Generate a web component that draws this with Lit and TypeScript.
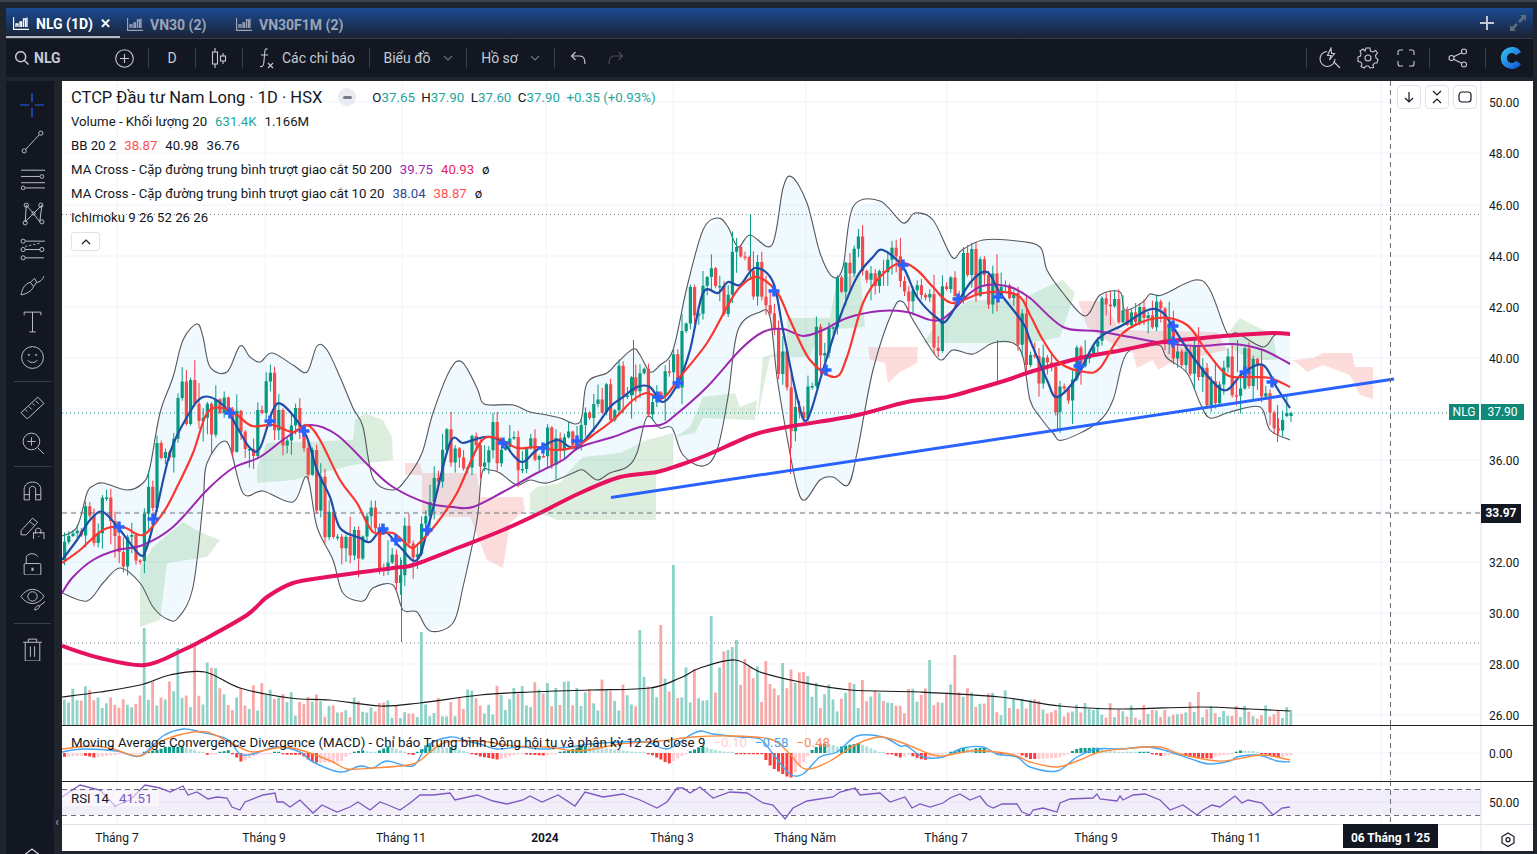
import {LitElement, html, svg, css} from 'lit'
import {customElement} from 'lit/decorators.js'

type Pt = [number, number]

const pts = (s: string): Pt[] =>
  s.trim().split(/\s+/).map((p) => p.split(',').map(Number) as Pt)

// all series are in screen coordinates, read from the reference
const bbUpper = pts('62,536 77,527 87,493 93,486 103,483 127,490 143,483 150,467 160,413 173,377 183,340 197,324 203,337 210,367 227,372 240,346 250,357 260,362 272,353 293,365 307,372 317,346 327,350 340,377 353,408 363,427 373,478 393,490 407,478 422,453 433,413 450,370 462,362 477,388 482,402 490,405 513,405 530,412 547,415 560,418 580,422 587,383 607,373 617,363 633,349 640,355 650,372 660,365 673,350 687,287 703,230 718,218 728,227 738,247 750,235 772,245 783,188 792,177 807,203 820,253 833,277 843,267 853,207 880,201 903,223 915,213 933,220 952,257 962,250 983,240 1017,241 1040,247 1047,270 1063,293 1085,316 1100,295 1120,292 1125,310 1143,302 1150,294 1162,295 1195,280 1210,290 1227,333 1237,333 1263,347 1275,335 1290,333')
const bbLower = pts('62,593 87,601 103,583 120,568 140,583 153,607 167,619 178,618 193,587 203,503 207,463 227,442 243,493 263,491 293,502 307,477 317,527 333,560 343,593 363,601 373,588 393,585 403,610 417,612 430,631 453,623 463,587 477,520 482,473 490,470 500,473 517,485 530,480 547,483 573,473 583,470 597,480 610,473 627,467 637,453 647,417 660,428 672,428 683,455 703,466 717,450 728,397 738,330 760,312 770,317 777,377 787,437 797,487 805,500 820,480 833,477 848,485 857,453 873,370 893,310 903,302 913,320 933,352 942,360 953,350 973,354 993,343 1013,343 1023,357 1030,400 1040,417 1053,433 1063,440 1097,423 1113,400 1127,353 1158,345 1167,358 1187,373 1200,403 1210,418 1230,412 1260,407 1270,430 1290,440')
const ma10 = pts('62,560 77,540 90,520 103,512 120,530 140,555 147,547 155,517 170,453 187,417 203,397 223,405 237,427 250,448 260,448 273,410 283,405 305,433 317,470 330,497 340,528 360,538 370,542 383,530 400,547 417,560 430,520 450,443 463,443 480,438 490,437 503,442 513,455 523,462 537,450 557,440 570,447 580,445 597,425 610,407 623,397 637,387 650,387 663,402 678,383 690,350 703,293 718,293 728,282 740,285 755,268 773,282 783,330 797,397 807,420 823,370 840,317 857,277 873,257 883,250 903,267 917,297 937,318 947,320 970,283 987,272 1000,293 1023,323 1030,340 1047,380 1057,397 1077,377 1097,340 1123,325 1148,310 1162,312 1173,327 1190,353 1213,382 1227,390 1243,373 1263,365 1277,388 1290,408')
const ma20 = pts('62,563 80,550 103,530 123,527 143,535 163,513 177,487 193,453 207,413 223,408 237,415 252,426 273,425 293,432 307,425 320,440 340,480 357,503 373,532 393,533 410,547 417,545 437,523 457,493 480,443 497,438 517,448 537,447 557,450 577,446 593,435 613,420 633,400 647,393 663,398 680,377 707,343 727,307 740,287 757,277 777,292 790,320 810,360 835,377 847,357 863,303 880,277 900,263 917,270 933,287 952,303 983,293 1017,295 1030,315 1043,340 1060,363 1085,372 1100,368 1123,333 1157,318 1187,325 1207,352 1227,375 1247,377 1270,378 1290,387')
const ma50 = pts('62,593 73,577 93,560 117,550 143,545 173,527 207,490 233,468 260,457 287,437 310,425 337,435 370,467 393,487 427,503 453,507 473,507 503,492 537,473 563,460 580,447 613,437 640,427 660,425 673,417 707,387 740,350 763,332 783,329 803,336 823,330 847,318 880,311 907,312 940,320 970,293 987,285 1010,287 1030,298 1063,327 1097,331 1130,337 1157,342 1197,346 1233,344 1263,350 1290,364')
const ma200 = pts('62,646 100,658 145,665 183,650 203,640 247,615 267,597 293,583 327,577 393,568 413,565 460,547 503,530 540,513 580,493 620,477 657,472 680,465 707,455 753,435 787,427 853,416 907,402 947,397 973,390 1007,380 1030,372 1080,358 1123,350 1163,342 1203,338 1237,335 1273,333 1290,334')
const volMa = pts('62,697 100,692 140,685 170,675 205,672 240,688 290,698 330,700 380,706 420,703 480,695 530,692 590,690 650,688 680,678 700,668 735,660 760,672 800,682 850,690 920,692 1000,697 1060,706 1120,709 1200,707 1250,709 1290,711')
const macd = pts('62,753 83,750 117,752 140,757 163,737 183,730 200,733 227,740 240,755 253,755 277,748 300,753 313,763 340,773 360,767 373,769 387,762 413,767 427,747 450,738 467,742 480,745 497,750 520,748 543,750 570,748 590,745 620,743 647,743 667,750 687,738 700,732 713,735 740,738 760,740 773,755 790,775 803,775 820,758 837,753 857,737 883,738 900,747 907,747 923,758 943,758 963,749 983,748 997,755 1017,758 1030,768 1057,772 1077,758 1097,750 1120,750 1147,748 1167,752 1197,762 1210,765 1230,762 1237,758 1253,756 1263,757 1277,762 1290,763')
const signal = pts('62,750 93,747 113,750 140,757 160,743 183,735 207,733 233,745 253,753 283,748 307,753 333,763 347,770 373,769 413,765 430,753 447,743 480,742 513,747 547,748 580,752 620,745 660,742 693,738 730,737 770,740 787,752 800,767 810,770 830,762 857,745 880,738 900,743 913,748 930,755 943,757 970,752 997,753 1017,757 1030,763 1057,768 1077,762 1100,753 1133,749 1160,748 1180,755 1217,762 1237,760 1263,756 1290,761')
const rsi = pts('62,797 80,785 100,790 115,806 130,800 145,785 160,788 170,792 183,786 188,795 197,792 208,799 217,797 227,798 232,807 240,810 245,802 263,795 275,793 277,802 283,802 290,807 300,800 313,813 322,805 337,812 350,807 358,802 370,810 380,802 388,805 400,810 410,803 420,795 433,795 450,793 455,800 477,795 493,801 507,804 523,800 530,796 542,802 558,795 575,806 585,792 603,797 623,794 640,800 657,808 667,802 677,788 683,788 690,793 700,787 713,798 730,792 747,793 763,803 773,805 785,819 793,808 807,801 833,797 840,792 855,788 860,795 880,793 890,802 905,797 912,808 920,804 930,807 943,803 950,798 960,794 970,800 980,796 987,805 993,808 1002,804 1017,804 1022,812 1030,815 1033,810 1043,808 1057,812 1060,803 1070,799 1093,798 1097,794 1100,799 1117,801 1120,796 1123,800 1133,795 1145,794 1160,800 1170,810 1183,805 1197,815 1203,810 1212,805 1220,807 1235,796 1242,803 1248,800 1262,803 1273,815 1282,808 1290,807')
const tail = pts('1262,382 1268,405 1272,428 1277,432 1282,415 1286,420 1290,414')

const cloudGreen = [
  '140,567 153,547 183,522 200,532 220,540 207,557 167,563 160,620 140,627',
  '257,467 267,443 353,440 355,420 365,413 383,420 392,437 393,460 353,465 293,480 257,483',
  '530,493 537,487 560,483 570,470 583,457 620,453 647,440 673,433 673,467 656,470 656,520 558,520 530,510',
  '675,437 690,427 703,397 735,393 740,407 757,400 755,420 703,418 695,433',
  '757,420 763,357 787,350 787,318 830,318 837,280 860,273 865,327 820,330 810,357 770,357',
  '923,343 940,320 970,300 1020,300 1040,290 1063,280 1075,293 1060,337 1030,343',
  '1228,333 1240,318 1257,327 1273,333 1277,360 1250,360 1230,347',
]
const cloudRed = [
  '405,463 420,463 422,473 477,473 480,497 523,497 525,510 510,523 503,568 487,560 470,517 447,517 422,512 422,475 405,475',
  '868,347 918,347 917,363 900,372 888,383 885,363 870,360',
  '1078,301 1103,301 1120,330 1217,332 1227,350 1170,363 1158,370 1153,360 1137,368 1133,353 1117,347 1087,327',
  '1292,360 1313,358 1323,353 1352,353 1355,367 1373,367 1373,399 1360,395 1350,375 1323,365 1307,372 1297,363',
]
const crosses: Pt[] = pts('119,527 153,519 230,413 270,421 304,431 383,529 396,540 427,530 503,443 543,448 577,441 658,397 678,383 774,291 826,370 903,265 958,299 998,297 1079,366 1173,326 1173,342 1245,372 1272,382')

const interp = (line: Pt[], x: number) => {
  if (x <= line[0][0]) return line[0][1]
  for (let i = 1; i < line.length; i++) {
    const [x1, y1] = line[i]
    if (x <= x1) {
      const [x0, y0] = line[i - 1]
      return y0 + ((y1 - y0) * (x - x0)) / (x1 - x0)
    }
  }
  return line[line.length - 1][1]
}

// catmull-rom through the points, keeps the curves from looking angular
const smooth = (p: Pt[]) => {
  let d = `M${p[0][0]} ${p[0][1]}`
  for (let i = 0; i < p.length - 1; i++) {
    const a = p[Math.max(i - 1, 0)]
    const b = p[i]
    const c = p[i + 1]
    const e = p[Math.min(i + 2, p.length - 1)]
    const c1x = b[0] + (c[0] - a[0]) / 6
    const c1y = b[1] + (c[1] - a[1]) / 6
    const c2x = c[0] - (e[0] - b[0]) / 6
    const c2y = c[1] - (e[1] - b[1]) / 6
    d += `C${c1x.toFixed(1)} ${c1y.toFixed(1)} ${c2x.toFixed(1)} ${c2y.toFixed(1)} ${c[0]} ${c[1]}`
  }
  return d
}
const straight = (p: Pt[]) => 'M' + p.map((q) => q.join(' ')).join('L')

let seed = 20231
const rnd = () => {
  seed = (seed + 0x6d2b79f5) | 0
  let t = Math.imul(seed ^ (seed >>> 15), 1 | seed)
  t = (t + Math.imul(t ^ (t >>> 7), 61 | t)) ^ t
  return ((t ^ (t >>> 14)) >>> 0) / 4294967296
}

const STEP = 4.2
const volSpikes: Pt[] = pts('143,628 175,648 193,645 420,632 660,625 640,630 672,565 708,616 735,640 927,660 955,655 1195,692')

const up = {wick: '', body: '', vol: ''}
const down = {wick: '', body: '', vol: ''}
let prev = 560
for (let x = 63; x <= 1290; x += STEP) {
  const top = interp(bbUpper, x)
  const bot = interp(bbLower, x)
  const center = x > 1262 ? interp(tail, x) : interp(ma10, x + 12)
  const amp = x > 1262 ? 6 : Math.min(34, Math.max(13, (bot - top) * 0.34))
  let close = center + (rnd() - 0.5) * amp * 2
  close = Math.min(bot - 3, Math.max(top + 3, close))
  let open = prev
  if (x > 1285) {
    open = 416
    close = 413
  }
  const hi = Math.max(top - 3, Math.min(open, close) - rnd() * rnd() * 26 - 1)
  const lo = Math.min(bot + 3, Math.max(open, close) + rnd() * rnd() * 26 + 1)
  const g = close <= open ? up : down
  const px = x.toFixed(1)
  const bodyTop = Math.min(open, close)
  const bodyH = Math.max(1.5, Math.abs(open - close))
  g.wick += `M${(x + 1.6).toFixed(1)} ${hi.toFixed(1)}V${lo.toFixed(1)}`
  g.body += `M${px} ${bodyTop.toFixed(1)}h3.2v${bodyH.toFixed(1)}h-3.2z`
  const ma = interp(volMa, x)
  let volTop = 726 - (726 - ma) * (0.35 + rnd() * 0.95)
  for (const [sx, sy] of volSpikes) if (Math.abs(sx - x) < STEP / 2) volTop = sy
  g.vol += `M${px} ${volTop.toFixed(1)}h2.8V726h-2.8z`
  prev = close
}

// a few long shadows that stand out in the reference
const longWicksUp = 'M750.5 214V280M633.5 340V395M1237.5 340V372M997.5 340V382'
const longWicksDown = 'M401.5 560V642M790.5 430V474M1057.5 398V430M1277.5 405V442'

const hist: {d: string; c: string}[] = []
{
  let last = 0
  const buckets: Record<string, string> = {}
  for (let x = 63; x <= 1290; x += STEP) {
    const v = (interp(signal, x) - interp(macd, x)) * 1.25
    const c = v >= 0 ? (v >= last ? '#0e9b88' : '#b2dfdb') : v <= last ? '#ff3b3b' : '#ffcdd2'
    const h = Math.max(1.2, Math.abs(v))
    const y = v >= 0 ? 754 - h : 754
    buckets[c] = (buckets[c] || '') + `M${x.toFixed(1)} ${y.toFixed(1)}h3v${h.toFixed(1)}h-3z`
    last = v
  }
  for (const c in buckets) hist.push({d: buckets[c], c})
}

const bandFill = straight(bbUpper) + 'L' + [...bbLower].reverse().map((q) => q.join(' ')).join('L') + 'Z'

const gridX = [117, 265, 402, 546, 673, 806, 947, 1097, 1236, 1381]
const gridY = [102, 153, 205, 256, 307, 358, 409, 460, 511, 562, 613, 664, 715]
const priceLabels: [string, number][] = [
  ['50.00', 102], ['48.00', 153], ['46.00', 205], ['44.00', 256], ['42.00', 307], ['40.00', 358],
  ['36.00', 460], ['32.00', 562], ['30.00', 613], ['28.00', 664], ['26.00', 715],
]
const timeLabels: [string, number, boolean][] = [
  ['Tháng 7', 117, false], ['Tháng 9', 264, false], ['Tháng 11', 401, false], ['2024', 545, true],
  ['Tháng 3', 672, false], ['Tháng Năm', 805, false], ['Tháng 7', 946, false], ['Tháng 9', 1096, false], ['Tháng 11', 1236, false],
]

const I = (body: unknown, size = 25, view = 24) =>
  html`<svg class="ico" width=${size} height=${size} viewBox="0 0 ${view} ${view}">${body}</svg>`

const tabIcon = html`<svg class="tabico" width="16" height="13" viewBox="0 0 16 13"><path d="M.5 0V12.5H16M3 10V7h2v3M7 10V5h1.500v5M10.500 10V2h2v8M14 10V.5" /></svg>`

const sideIcons = {
  cross: html`<svg width="24" height="24" viewBox="0 0 24 24"><path d="M12 0V9M12 15V24M0 12H9M15 12H24" fill="none" stroke="#2962ff" stroke-width="1.2"/></svg>`,
  line: I(svg`<path d="M5.500 19.500 18.500 5.500"/><circle cx="4" cy="21" r="2"/><circle cx="20" cy="4" r="2"/>`),
  fib: I(svg`<path d="M1 5H24M1 11H19M1 17H24M5 22H24"/><circle cx="21" cy="11" r="1.800"/><circle cx="3" cy="22" r="1.800"/>`),
  xabcd: I(svg`<path d="M6 4 5 20 13 12 19 20 21 4 13 12 6 4"/><circle cx="6" cy="4" r="2"/><circle cx="5" cy="21" r="2"/><circle cx="20" cy="4" r="2"/><circle cx="21" cy="20" r="2"/><circle cx="13" cy="12" r="1.500"/>`),
  pattern: I(svg`<path d="M5 4H24M5 12H19M5 20H23" /><path d="M5 9 19 6" stroke-dasharray="2 2"/><circle cx="3" cy="4" r="2"/><circle cx="3" cy="12" r="2"/><circle cx="21" cy="12" r="2"/><circle cx="3" cy="20" r="2"/>`),
  brush: I(svg`<path d="M1 21C2 15 5 10 10 9L13 13C11 18 6 20 1 21ZM10 9 14 5 16 9 13 13M16 9C19 9 22 6 23 3"/>`),
  text: I(svg`<path d="M4 6V3H20V6M12 3V22M9 22H15"/>`),
  smile: I(svg`<circle cx="12" cy="12" r="10.500"/><path d="M7.500 14.500C9 17.500 15 17.500 16.500 14.500"/><circle cx="8.500" cy="9.500" r=".6"/><circle cx="15.500" cy="9.500" r=".6"/>`),
  ruler: I(svg`<path d="M1 18 17 3 23 9 7 24ZM5 15 7 17M8.500 12 11.500 15M12 9 14 11M15 6.500 18 9.500"/>`),
  zoom: I(svg`<circle cx="11" cy="11" r="8"/><path d="M17 17 23 23M11 7V15M7 11H15"/>`),
  magnet: I(svg`<path d="M4 21V11C4 1.500 20 1.500 20 11V21H15V11C15 7 9 7 9 11V21ZM4 16H9M15 16H20"/>`),
  pencil: I(svg`<path d="M1 16 12 4 17 8 6 20 1 20ZM9 7 14 11"/><path d="M15 19V15.500C15 13 20 13 20 15.500V19"/><rect x="13" y="18" width="10" height="6.500" /><path d="M18 21V22"/>`),
  lock: I(svg`<path d="M6 13V7.500C6 3 15 2 17 6.500"/><rect x="4" y="13" width="16" height="11" rx="1"/><path d="M12 17V20" stroke-width="2"/>`),
  eye: I(svg`<path d="M1 10C7 1 17 1 23 10 17 19 7 19 1 10Z"/><circle cx="12" cy="10" r="4.500"/><path d="M14 23C15 19 18 18 19 19 18 22 16 23 14 23ZM19 19 24 15"/>`),
  trash: I(svg`<path d="M3 6H21M8 6V3H16V6M5 6V24H19V6M10 10V20M14 10V20"/>`),
}

@customElement('app-root')
export class AppRoot extends LitElement {
  static styles = css`
    :host {
      display: block;
      width: 1537px;
      height: 854px;
      overflow: hidden;
      background: #20242d;
      font-family: Roboto, 'Liberation Sans', sans-serif;
    }
    .app {
      position: relative;
      display: flex;
      flex-direction: column;
      height: 854px;
      box-sizing: border-box;
      padding: 8px 4px 3px 6px;
      border-top: 2px solid #3c4048;
    }
    .tabs {
      flex: none;
      margin-top: -2px;
      height: 31px;
      box-sizing: border-box;
      display: flex;
      align-items: stretch;
      background: linear-gradient(#1a4a92, #1b2334);
      border-bottom: 1px solid #343c48;
    }
    .tab {
      display: flex;
      align-items: center;
      gap: 7px;
      padding: 3px 0 0 7px;
      font-size: 14px;
      font-weight: 700;
      color: #9aa4b6;
      box-sizing: border-box;
      white-space: nowrap;
      flex: none;
    }
    .tab.active {
      color: #fff;
      width: 114px;
      border-bottom: 2px solid #b4b9c4;
    }
    .tab.second {
      width: 109px;
    }
    .tabico {
      fill: none;
      stroke: currentColor;
      stroke-width: 1.3;
      flex: none;
    }
    .close {
      font-size: 13px;
    }
    .tabs .end {
      margin-left: auto;
      display: flex;
      align-items: center;
      gap: 15px;
      padding: 0 6px 0 0;
    }
    .bar {
      flex: none;
      height: 38px;
      display: flex;
      align-items: center;
      background: #131722;
      color: #c6cad3;
      font-size: 14px;
    }
    .bar svg {
      fill: none;
      stroke: #c6cad3;
      stroke-width: 1.1;
      flex: none;
    }
    .sep {
      width: 1px;
      height: 20px;
      background: #3a3e4a;
      flex: none;
    }
    .cell {
      display: flex;
      align-items: center;
      justify-content: center;
      height: 100%;
      gap: 5px;
      flex: none;
    }
    .sym {
      font-weight: 700;
      color: #c6cad3;
    }
    .chev {
      stroke: #6f7583 !important;
    }
    .gap {
      flex: 1;
    }
    .body {
      flex: 1;
      min-height: 0;
      margin-top: 4px;
      display: flex;
      gap: 8px;
    }
    .side {
      width: 48px;
      flex: none;
      background: #131722;
      display: flex;
      flex-direction: column;
      align-items: center;
      padding: 6px 0 0 4px;
      box-sizing: border-box;
      margin-bottom: -3px;
    }
    .tool {
      flex: none;
      width: 44px;
      height: 36px;
      display: flex;
      align-items: center;
      justify-content: center;
    }
    .tool svg.ico {
      fill: none;
      stroke: #b9bdc6;
      stroke-width: 0.95;
    }
    .rule {
      flex: none;
      height: 13px;
      width: 37px;
      display: flex;
      align-items: center;
    }
    .rule.s {
      height: 12px;
    }
    .rule.l {
      height: 14px;
    }
    .rule::before {
      content: '';
      height: 1px;
      width: 100%;
      background: #3a3e4a;
    }
    .handle {
      position: absolute;
      left: 53px;
      top: 808px;
      width: 8px;
      height: 25px;
      border-radius: 4px 0 0 4px;
      background: #1e222d;
      color: #b2b5be;
      font-size: 12px;
      line-height: 25px;
      text-align: center;
    }
    .up {
      position: absolute;
      left: 22px;
      top: 845px;
      fill: none;
      stroke: #d1d4dc;
      stroke-width: 1.2;
    }
    .chart {
      flex: 1;
      min-width: 0;
      background: #fff;
      display: flex;
      flex-direction: column;
    }
    .pane {
      position: relative;
      flex: none;
    }
    .pane.macd {
      border-top: 1px solid #222;
      margin-top: -1px;
      height: 55px;
    }
    .pane.rsi {
      border-top: 1px solid #222;
      height: 43px;
      box-sizing: border-box;
    }
    .pane svg.plot {
      display: block;
    }
    .plot text {
      font-size: 12px;
      fill: #131722;
      font-family: Roboto, 'Liberation Sans', sans-serif;
    }
    .plot text.b {
      font-weight: 700;
    }
    .legend {
      position: absolute;
      left: 9px;
      top: 4px;
      display: flex;
      flex-direction: column;
      align-items: flex-start;
      color: #131722;
      font-size: 13.2px;
    }
    .row {
      height: 24px;
      display: flex;
      align-items: center;
      gap: 8px;
      white-space: nowrap;
    }
    .title {
      font-size: 16.5px;
      height: 24px;
    }
    .dash {
      width: 18px;
      height: 18px;
      border-radius: 50%;
      background: #e9ebf0;
      margin-left: 8px;
      display: flex;
      align-items: center;
      justify-content: center;
    }
    .dash::before {
      content: '';
      width: 9px;
      height: 3px;
      border-radius: 2px;
      background: #787b86;
    }
    .ohlc {
      margin-left: 8px;
      display: flex;
      gap: 6.5px;
      font-size: 13.3px;
      color: #131722;
    }
    .t { color: #26a69a; }
    .r { color: #ff5252; }
    .pk { color: #e91e63; }
    .pu { color: #9c27b0; }
    .bl { color: #2a4b9b; }
    .collapse {
      width: 29px;
      height: 19px;
      margin-top: 3px;
      border: 1px solid #e0e3eb;
      border-radius: 3px;
      box-sizing: border-box;
      display: flex;
      align-items: center;
      justify-content: center;
    }
    .collapse svg {
      fill: none;
      stroke: #131722;
      stroke-width: 1.2;
    }
    .btns {
      position: absolute;
      left: 1335px;
      top: 4px;
      display: flex;
      gap: 4px;
    }
    .btn {
      width: 24px;
      height: 24px;
      box-sizing: border-box;
      border: 1px solid #e0e3eb;
      border-radius: 4px;
      background: #fff;
      display: flex;
      align-items: center;
      justify-content: center;
    }
    .btn svg {
      fill: none;
      stroke: #131722;
      stroke-width: 1.2;
    }
    .tag {
      position: absolute;
      font-size: 12px;
      font-weight: 700;
      color: #fff;
      text-align: center;
    }
    .tag.dark { background: #131722; left: 1419px; top: 423px; width: 40px; height: 19px; line-height: 19px; }
    .tag.nlg { background: #0f8a78; left: 1387px; top: 323px; width: 30px; height: 16px; line-height: 16px; font-weight: 400; }
    .tag.px { background: #0f8a78; left: 1419px; top: 323px; width: 43px; height: 16px; line-height: 16px; font-weight: 400; }
    .sublegend {
      position: absolute;
      top: 9px;
      left: 9px;
      font-size: 13.3px;
      color: #131722;
      white-space: nowrap;
      display: flex;
      gap: 8px;
    }
    .sublegend.rsi {
      left: 0;
      gap: 10px;
      padding: 0 7px 0 9px;
      background: rgba(255, 255, 255, 0.55);
    }
    .pale { color: #ffcdd2; }
    .bm { color: #4aa3f0; }
    .om { color: #ff8a50; }
    .prsi { color: #7e57c2; }
    .datetag {
      position: absolute;
      left: 1281px;
      top: 0;
      width: 95px;
      height: 24px;
      line-height: 28px;
      background: #131722;
      color: #fff;
      font-size: 12px;
      font-weight: 700;
      text-align: center;
    }
  `

  private pane(top: number, height: number, content: unknown) {
    return html`<svg class="plot" width="1471" height=${height} viewBox="62 ${top} 1471 ${height}">
      <path d="M1481 ${top}V${top + height}" stroke="#e0e3eb" />
      ${content}
    </svg>`
  }

  private grid(top: number, bottom: number) {
    return svg`<path stroke="#f0f3fa" fill="none" d=${gridX.map((x) => `M${x} ${top}V${bottom}`).join('')} />`
  }

  private vLine(top: number, bottom: number) {
    return svg`<path d="M1390.500 ${top}V${bottom}" stroke="#6a6d78" stroke-dasharray="5 4" />`
  }

  private main() {
    return svg`
      ${this.grid(81, 726)}
      <path stroke="#f0f3fa" d=${gridY.map((y) => `M62 ${y}H1481`).join('')} />
      ${priceLabels.map(([t, y]) => svg`<text x="1489" y=${y + 5}>${t}</text>`)}
      <path d="M62 214.500H1481M62 643H1481" stroke="#7a7d86" stroke-dasharray="1 3" />
      <path d="M62 413H1481" stroke="#0f8a78" stroke-dasharray="1 3" />
      ${cloudGreen.map((p) => svg`<polygon points=${p} fill="#43a047" fill-opacity=".18" />`)}
      ${cloudRed.map((p) => svg`<polygon points=${p} fill="#f44336" fill-opacity=".18" />`)}
      <path d=${up.vol} fill="#8ed2c8" />
      <path d=${down.vol} fill="#f9a8a8" />
      <path d=${smooth(volMa)} fill="none" stroke="#1a1a1a" stroke-width="1.2" />
      <path d=${bandFill} fill="#03a9f4" fill-opacity=".06" />
      <path d=${smooth(bbUpper)} fill="none" stroke="#55575e" stroke-width="1.1" />
      <path d=${smooth(bbLower)} fill="none" stroke="#55575e" stroke-width="1.1" />
      <path d=${up.wick + longWicksUp} stroke="#089981" />
      <path d=${down.wick + longWicksDown} stroke="#f23645" />
      <path d=${up.body} fill="#089981" />
      <path d=${down.body} fill="#f44a4a" />
      <path d=${smooth(ma50)} fill="none" stroke="#9c27b0" stroke-width="2" />
      <path d=${smooth(ma200)} fill="none" stroke="#e6125f" stroke-width="4" />
      <path d=${smooth(ma10)} fill="none" stroke="#1e4ea8" stroke-width="2.2" />
      <path d=${smooth(ma20)} fill="none" stroke="#f9372f" stroke-width="2.2" />
      <path d="M611 497.500 1394 379" stroke="#2962ff" stroke-width="3" />
      ${crosses.map(([x, y]) => svg`<path d="M${x - 5.5} ${y}H${x + 5.5}M${x} ${y - 5.5}V${y + 5.5}" stroke="#2962ff" stroke-width="3.5" />`)}
      <path d="M62 513H1481" stroke="#6a6d78" stroke-dasharray="5 4" />
      ${this.vLine(81, 726)}`
  }

  private macd() {
    return svg`
      ${this.grid(726, 781)}
      <path d="M62 754H1481" stroke="#f0f3fa" />
      ${hist.map((h) => svg`<path d=${h.d} fill=${h.c} />`)}
      <path d=${smooth(macd)} fill="none" stroke="#42a5f5" stroke-width="1.4" />
      <path d=${smooth(signal)} fill="none" stroke="#ff8a3d" stroke-width="1.4" />
      ${this.vLine(726, 781)}
      <text x="1489" y="759">0.00</text>`
  }

  private rsi() {
    return svg`
      <rect x="62" y="789" width="1419" height="26" fill="#7e57c2" fill-opacity=".1" />
      ${this.grid(781, 824)}
      <path d="M62 802H1481" stroke="#e8e3f4" />
      <path d="M62 789.500H1481M62 815.500H1481" stroke="#6a6d78" stroke-dasharray="5 4" />
      <path d=${straight(rsi)} fill="none" stroke="#7e57c2" stroke-width="1.3" />
      ${this.vLine(781, 824)}
      <text x="1489" y="807">50.00</text>`
  }

  private axis() {
    return svg`
      <path d="M62 824.500H1533" stroke="#e0e3eb" />
      ${timeLabels.map(([t, x, bold]) => svg`<text class=${bold ? 'b' : ''} x=${x} y="842" text-anchor="middle">${t}</text>`)}
      <path d="M1508 833 1514 836.500V843L1508 846.500 1502 843V836.500Z" fill="none" stroke="#131722" stroke-width="1.2" />
      <circle cx="1508" cy="839.700" r="2" fill="none" stroke="#131722" stroke-width="1.2" />`
  }

  render() {
    const chev = html`<svg class="chev" width="10" height="6" viewBox="0 0 10 6"><path d="M1 1 5 5 9 1" /></svg>`
    return html`
      <div class="app">
        <div class="tabs">
          <div class="tab active">${tabIcon}<span>NLG (1D)</span><span class="close">✕</span></div>
          <div class="tab second">${tabIcon}<span>VN30 (2)</span></div>
          <div class="tab">${tabIcon}<span>VN30F1M (2)</span></div>
          <div class="end">
            <svg width="14" height="14" viewBox="0 0 14 14"><path d="M7 0V14M0 7H14" stroke="#c3c7d0" stroke-width="2"/></svg>
            <svg width="18" height="18" viewBox="0 0 18 18"><path d="M11 1H17V7L15 5 11 9 9 7 13 3ZM1 17V11L3 13 7 9 9 11 5 15 7 17Z" fill="#5e6b80"/></svg>
          </div>
        </div>
        <div class="bar">
          <div class="cell" style="width:60px;margin-left:9px;gap:5px;justify-content:flex-start">
            <svg width="14" height="14" viewBox="0 0 14 14" style="stroke-width:1.5"><circle cx="5.700" cy="5.700" r="5"/><path d="M9.500 9.500 13.500 13.500"/></svg>
            <span class="sym">NLG</span>
          </div>
          <div class="cell" style="width:73px;justify-content:flex-end;padding-right:14px;box-sizing:border-box">
            <svg width="19" height="19" viewBox="0 0 19 19"><circle cx="9.500" cy="9.500" r="8.800"/><path d="M9.500 5V14M5 9.500H14"/></svg>
          </div>
          <div class="sep"></div>
          <div class="cell" style="width:46px">D</div>
          <div class="sep"></div>
          <div class="cell" style="width:46px">
            <svg width="16" height="20" viewBox="0 0 16 20"><path d="M4 0V4M4 16V20M12 5V8M12 13V16"/><rect x="1.500" y="4" width="5" height="12"/><rect x="9.500" y="8" width="5" height="5"/></svg>
          </div>
          <div class="sep"></div>
          <div class="cell" style="width:126px;justify-content:flex-start;padding-left:15px;box-sizing:border-box;gap:8px">
            <svg width="16" height="22" viewBox="0 0 16 22"><path d="M9.500 2C7 1.500 7 3 6.800 5L5.800 16C5.500 19 4 20 2 19.500M3 8H10M10 16 15 21M15 16 10 21"/></svg>
            <span>Các chỉ báo</span>
          </div>
          <div class="sep"></div>
          <div class="cell" style="width:96px">
            <span>Biểu đồ</span><span style="width:2px"></span>${chev}
          </div>
          <div class="sep"></div>
          <div class="cell" style="width:87px">
            <span>Hồ sơ</span><span style="width:2px"></span>${chev}
          </div>
          <div class="sep"></div>
          <div class="cell" style="width:46px">
            <svg width="16" height="14" viewBox="0 0 16 14"><path d="M5.500 1 1.500 5 5.500 9M1.500 5H10C13 5 15 7 15 13"/></svg>
          </div>
          <div class="cell" style="width:30px">
            <svg width="16" height="14" viewBox="0 0 16 14" style="stroke:#4a4e5a"><path d="M10.500 1 14.500 5 10.500 9M14.500 5H6C3 5 1 7 1 13"/></svg>
          </div>
          <div class="gap"></div>
          <div class="sep"></div>
          <div class="cell" style="width:46px">
            <svg width="22" height="22" viewBox="0 0 22 22"><path d="M8 4.500A7.500 7.500 0 1 0 16 12M14.500 14.500 21 21M12 1 8.500 8.500H12L10.500 13 15.500 6.500H12.500Z"/></svg>
          </div>
          <div class="cell" style="width:30px">
            <svg width="22" height="22" viewBox="0 0 22 22"><circle cx="11" cy="11" r="3"/><path d="M9 1H13L13.500 4 16 5 18.500 3.500 20.500 6 18.500 8.500 19 11 21 12.500 20 16 17.500 16 16 18 16.500 20.500 13 21 11.500 19 9 19 7 21 4 19.500 5 17 3.500 15 1 14.500 1 10 3.500 9 4 6.500 3 4 6 2 8 4Z"/></svg>
          </div>
          <div class="cell" style="width:46px">
            <svg width="18" height="18" viewBox="0 0 18 18"><path d="M6 1H3Q1 1 1 3V6M12 1H15Q17 1 17 3V6M1 12V15Q1 17 3 17H6M17 12V15Q17 17 15 17H12"/></svg>
          </div>
          <div class="sep"></div>
          <div class="cell" style="width:55px">
            <svg width="20" height="20" viewBox="0 0 20 20"><circle cx="3.500" cy="10" r="2.500"/><circle cx="16" cy="3.500" r="2.500"/><circle cx="16" cy="16.500" r="2.500"/><path d="M5.700 8.800 13.800 4.700M5.700 11.200 13.800 15.300"/></svg>
          </div>
          <div class="sep"></div>
          <div class="cell" style="width:47px;padding-left:4px;box-sizing:border-box">
            <svg width="24" height="24" viewBox="0 0 24 24" style="stroke:none">
              <defs><linearGradient id="lg" x1="0" y1="0" x2="1" y2="1"><stop offset="0" stop-color="#35c6f4"/><stop offset="1" stop-color="#1450d8"/></linearGradient></defs>
              <path d="M21 6A11 11 0 1 0 21 18L16 14.800A5 5 0 1 1 16 9.200Z" fill="url(#lg)"/>
            </svg>
          </div>
        </div>
        <div class="body">
          <div class="side">
            <div class="tool">${sideIcons.cross}</div>
            <div class="tool">${sideIcons.line}</div>
            <div class="tool">${sideIcons.fib}</div>
            <div class="tool">${sideIcons.xabcd}</div>
            <div class="tool">${sideIcons.pattern}</div>
            <div class="tool">${sideIcons.brush}</div>
            <div class="tool">${sideIcons.text}</div>
            <div class="tool">${sideIcons.smile}</div>
            <div class="rule"></div>
            <div class="tool">${sideIcons.ruler}</div>
            <div class="tool">${sideIcons.zoom}</div>
            <div class="rule s"></div>
            <div class="tool">${sideIcons.magnet}</div>
            <div class="tool">${sideIcons.pencil}</div>
            <div class="tool">${sideIcons.lock}</div>
            <div class="tool">${sideIcons.eye}</div>
            <div class="rule l"></div>
            <div class="tool">${sideIcons.trash}</div>
          </div>
          <div class="chart">
            <div class="pane">
              ${this.pane(81, 645, this.main())}
              <div class="legend">
                <div class="row title">
                  <span>CTCP Đầu tư Nam Long · 1D · HSX</span>
                  <span class="dash"></span>
                  <span class="ohlc">
                    <span>O<span class="t">37.65</span></span>
                    <span>H<span class="t">37.90</span></span>
                    <span>L<span class="t">37.60</span></span>
                    <span>C<span class="t">37.90</span></span>
                    <span class="t">+0.35 (+0.93%)</span>
                  </span>
                </div>
                <div class="row">Volume - Khối lượng 20 <span class="t">631.4K</span><span>1.166M</span></div>
                <div class="row">BB 20 2 <span class="r">38.87</span><span>40.98</span><span>36.76</span></div>
                <div class="row">MA Cross - Cặp đường trung bình trượt giao cắt 50 200 <span class="pu">39.75</span><span class="pk">40.93</span><span>ø</span></div>
                <div class="row">MA Cross - Cặp đường trung bình trượt giao cắt 10 20 <span class="bl">38.04</span><span class="r">38.87</span><span>ø</span></div>
                <div class="row">Ichimoku 9 26 52 26 26</div>
                <div class="collapse"><svg width="10" height="6" viewBox="0 0 10 6"><path d="M1 5 5 1 9 5"/></svg></div>
              </div>
              <div class="btns">
                <div class="btn"><svg width="12" height="12" viewBox="0 0 12 12"><path d="M6 1V11M2 7 6 11 10 7"/></svg></div>
                <div class="btn"><svg width="12" height="16" viewBox="0 0 12 16"><path d="M2 2 6 6 10 2M2 14 6 10 10 14"/></svg></div>
                <div class="btn"><svg width="14" height="12" viewBox="0 0 14 12"><rect x="1" y="1" width="12" height="10" rx="3"/></svg></div>
              </div>
              <div class="tag nlg">NLG</div>
              <div class="tag px">37.90</div>
              <div class="tag dark">33.97</div>
            </div>
            <div class="pane macd">
              ${this.pane(727, 54, this.macd())}
              <div class="sublegend">
                <span>Moving Average Convergence Divergence (MACD) - Chỉ báo Trung bình Động hội tụ và phân kỳ 12 26 close 9</span>
                <span class="pale">−0.10</span><span class="bm">−0.58</span><span class="om">−0.48</span>
              </div>
            </div>
            <div class="pane rsi">
              ${this.pane(782, 42, this.rsi())}
              <div class="sublegend rsi"><span>RSI 14</span><span class="prsi">41.51</span></div>
            </div>
            <div class="pane">
              ${this.pane(824, 27, this.axis())}
              <div class="datetag">06 Tháng 1 '25</div>
            </div>
          </div>
        </div>
        <div class="handle">‹</div>
        <svg class="up" width="20" height="10" viewBox="0 0 20 10"><path d="M1 9 10 2 19 9"/></svg>
      </div>
    `
  }
}
